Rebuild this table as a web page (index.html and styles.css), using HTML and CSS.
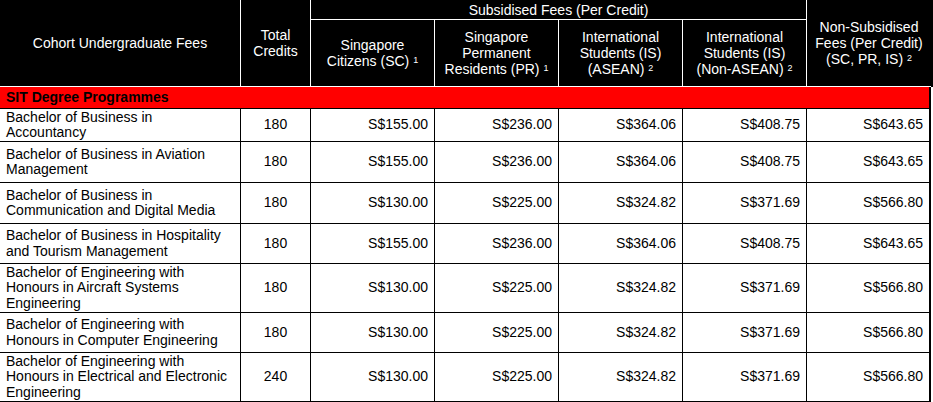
FILE: index.html
```html
<!DOCTYPE html>
<html lang="en">
<head>
<meta charset="utf-8">
<title>Cohort Undergraduate Fees</title>
<link rel="stylesheet" href="styles.css">
</head>
<body>
<table class="fees">
  <colgroup>
    <col class="c-name">
    <col class="c-credits">
    <col class="c-fee">
    <col class="c-fee">
    <col class="c-fee">
    <col class="c-fee">
    <col class="c-fee">
  </colgroup>
  <thead>
    <tr class="h-top">
      <th rowspan="2">Cohort Undergraduate Fees</th>
      <th rowspan="2">Total Credits</th>
      <th colspan="4">Subsidised Fees (Per Credit)</th>
      <th rowspan="2" class="last">Non-Subsidised Fees (Per Credit) (SC, PR, IS)&nbsp;<sup>2</sup></th>
    </tr>
    <tr class="h-sub">
      <th>Singapore Citizens (SC)&nbsp;<sup>1</sup></th>
      <th>Singapore Permanent Residents (PR)&nbsp;<sup>1</sup></th>
      <th>International Students (IS) (ASEAN)&nbsp;<sup>2</sup></th>
      <th>International Students (IS) (Non-ASEAN)&nbsp;<sup>2</sup></th>
    </tr>
  </thead>
  <tbody>
    <tr class="section">
      <td colspan="7">SIT Degree Programmes</td>
    </tr>
    <tr class="r33">
      <td class="name">Bachelor of Business in Accountancy</td>
      <td class="cr">180</td>
      <td class="num">S$155.00</td>
      <td class="num">S$236.00</td>
      <td class="num">S$364.06</td>
      <td class="num">S$408.75</td>
      <td class="num">S$643.65</td>
    </tr>
    <tr class="r41">
      <td class="name">Bachelor of Business in Aviation Management</td>
      <td class="cr">180</td>
      <td class="num">S$155.00</td>
      <td class="num">S$236.00</td>
      <td class="num">S$364.06</td>
      <td class="num">S$408.75</td>
      <td class="num">S$643.65</td>
    </tr>
    <tr class="r41">
      <td class="name">Bachelor of Business in Communication and Digital Media</td>
      <td class="cr">180</td>
      <td class="num">S$130.00</td>
      <td class="num">S$225.00</td>
      <td class="num">S$324.82</td>
      <td class="num">S$371.69</td>
      <td class="num">S$566.80</td>
    </tr>
    <tr class="r40">
      <td class="name">Bachelor of Business in Hospitality and Tourism Management</td>
      <td class="cr">180</td>
      <td class="num">S$155.00</td>
      <td class="num">S$236.00</td>
      <td class="num">S$364.06</td>
      <td class="num">S$408.75</td>
      <td class="num">S$643.65</td>
    </tr>
    <tr class="r49">
      <td class="name">Bachelor of Engineering with Honours in Aircraft Systems Engineering</td>
      <td class="cr">180</td>
      <td class="num">S$130.00</td>
      <td class="num">S$225.00</td>
      <td class="num">S$324.82</td>
      <td class="num">S$371.69</td>
      <td class="num">S$566.80</td>
    </tr>
    <tr class="r40">
      <td class="name">Bachelor of Engineering with Honours in Computer Engineering</td>
      <td class="cr">180</td>
      <td class="num">S$130.00</td>
      <td class="num">S$225.00</td>
      <td class="num">S$324.82</td>
      <td class="num">S$371.69</td>
      <td class="num">S$566.80</td>
    </tr>
    <tr class="r49 end">
      <td class="name">Bachelor of Engineering with Honours in Electrical and Electronic Engineering</td>
      <td class="cr">240</td>
      <td class="num">S$130.00</td>
      <td class="num">S$225.00</td>
      <td class="num">S$324.82</td>
      <td class="num">S$371.69</td>
      <td class="num">S$566.80</td>
    </tr>
  </tbody>
</table>
</body>
</html>
```

FILE: styles.css
```css
html, body {
  margin: 0;
  padding: 0;
  background: #fff;
}

.fees {
  border-collapse: separate;
  border-spacing: 0;
  table-layout: fixed;
  width: 931px;
  font-family: "Liberation Sans", Arial, sans-serif;
  font-size: 14px;
  color: #000;
}

.c-name { width: 241px; }
.c-credits { width: 70px; }
.c-fee { width: 124px; }

.fees th {
  background: #000;
  color: #fff;
  font-weight: normal;
  text-align: center;
  vertical-align: middle;
  line-height: 16px;
  padding: 0 3px;
  border-right: 1px solid #fff;
  border-bottom: 1px solid #fff;
}

.fees th.last {
  border-right: none;
  box-shadow: 2px 0 0 #000;
}

.h-top { height: 20px; }
.h-sub { height: 67px; }

.fees sup {
  font-size: 9px;
  line-height: 8px;
  vertical-align: 3px;
}

.section td {
  background: #ff0000;
  font-weight: bold;
  height: 21px;
  padding: 0 6px;
  line-height: 16px;
  border-bottom: 1px solid #000;
  border-right: 2px solid #000;
}

.fees tbody td {
  line-height: 15.5px;
  vertical-align: middle;
  border-right: 1px solid #000;
  border-bottom: 1px solid #000;
}

.fees tbody td:last-child {
  border-right: 2px solid #000;
}

.fees .name {
  text-align: left;
  padding: 0 10px 0 6px;
}

.fees .cr {
  text-align: center;
  padding: 0;
}

.fees .num {
  text-align: right;
  padding: 0 6px 0 0;
}

.r33 { height: 33px; }
.r40 { height: 40px; }
.r41 { height: 41px; }
.r49 { height: 49px; }

.end td { border-bottom-width: 2px; }
```
